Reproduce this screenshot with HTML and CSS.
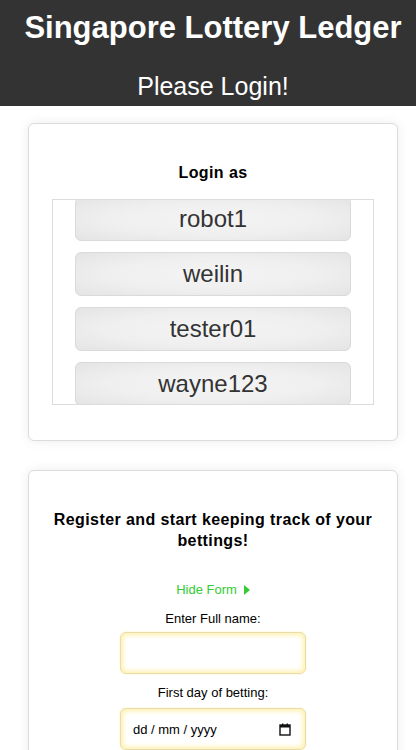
FILE: index.html
```html
<!DOCTYPE html>
<html lang="en">
<head>
<meta charset="utf-8">
<title>Singapore Lottery Ledger</title>
<link rel="stylesheet" href="styles.css">
</head>
<body>
<header class="topbar">
  <h1 class="title">Singapore Lottery Ledger</h1>
  <p class="subtitle">Please Login!</p>
</header>
<main class="content">
  <section class="card login-card">
    <h3 class="card-heading">Login as</h3>
    <div class="user-list">
      <div class="user-list-inner">
        <button class="user-btn">robot1</button>
        <button class="user-btn">weilin</button>
        <button class="user-btn">tester01</button>
        <button class="user-btn">wayne123</button>
      </div>
    </div>
  </section>
  <section class="card register-card">
    <h3 class="card-heading register-heading">Register and start keeping track of your bettings!</h3>
    <a class="toggle-link" href="#">Hide Form <svg class="caret" width="6" height="10" viewBox="0 0 6 10"><path d="M0 0 L6 5 L0 10 Z" fill="#33cc33"/></svg></a>
    <form class="reg-form">
      <label class="field-label" for="fullname">Enter Full name:</label>
      <input class="field-input" id="fullname" type="text">
      <label class="field-label second" for="firstday">First day of betting:</label>
      <div class="date-wrap">
        <input class="field-input date-input" id="firstday" type="text" placeholder="dd / mm / yyyy">
        <svg class="cal-icon" width="12" height="13" viewBox="0 0 12 13"><rect x="1" y="2" width="10" height="10" fill="none" stroke="#111" stroke-width="1.4"/><rect x="1" y="2" width="10" height="2.5" fill="#111"/><rect x="3" y="0.5" width="1.4" height="2" fill="#111"/><rect x="7.6" y="0.5" width="1.4" height="2" fill="#111"/></svg>
      </div>
    </form>
  </section>
</main>
</body>
</html>
```
FILE: styles.css
```css
* { box-sizing: border-box; }
html, body { margin: 0; padding: 0; background: #fff; }
body { font-family: "Liberation Sans", Arial, sans-serif; color: #000; }

.topbar {
  background: #333333;
  color: #fff;
  text-align: center;
  padding: 10px 0 5px 10px;
}
.title {
  margin: 0;
  font-size: 31px;
  line-height: 36px;
  font-weight: bold;
}
.subtitle {
  margin: 25px 0 0;
  font-size: 25px;
  line-height: 30px;
  font-weight: normal;
}

.content {
  padding: 17px 18px 0 28px;
  display: flex;
  flex-direction: column;
  gap: 29px;
}
.card {
  border: 1px solid #dcdcdc;
  border-radius: 6px;
  box-shadow: 0 0 12px rgba(0,0,0,0.08);
  background: #fff;
  padding: 0 23px;
  text-align: center;
}
.login-card { padding-top: 39px; padding-bottom: 35px; }
.card-heading {
  margin: 0;
  font-size: 16px;
  line-height: 19px;
  font-weight: bold;
  letter-spacing: 0.4px;
}
.user-list {
  margin-top: 17px;
  border: 1px solid #dcdcdc;
  height: 206px;
  overflow: hidden;
}
.user-list-inner {
  margin-top: -3px;
  display: flex;
  flex-direction: column;
  align-items: center;
  gap: 11px;
}
.user-btn {
  width: 276px;
  height: 44px;
  flex: none;
  border: 1px solid #dadada;
  border-radius: 6px;
  background: radial-gradient(ellipse at center, #f4f4f4 0%, #efefef 55%, #e4e4e4 100%);
  color: #333;
  font-family: "Liberation Sans", Arial, sans-serif;
  font-size: 24px;
  padding: 0;
}

.register-card { padding: 38px 8px 0; height: 300px; }
.register-heading { line-height: 21px; }
.toggle-link {
  display: inline-flex;
  align-items: center;
  gap: 7px;
  margin-top: 31px;
  font-size: 13px;
  line-height: 16px;
  color: #33cc33;
  text-decoration: none;
}
.reg-form {
  display: flex;
  flex-direction: column;
  align-items: center;
  margin-top: 13px;
}
.field-label {
  font-size: 13px;
  line-height: 16px;
  margin-bottom: 5px;
}
.field-label.second { margin-top: 11px; margin-bottom: 7px; }
.field-input {
  width: 186px;
  height: 42px;
  border: 1px solid #e6dcae;
  border-radius: 6px;
  background: #fff;
  box-shadow: inset 0 0 5px 2px #fff0a8, 0 0 2px #fff0a8;
  font-family: "Liberation Sans", Arial, sans-serif;
  font-size: 13px;
  padding: 0 12px;
  outline: none;
  color: #000;
}
.date-input::placeholder { color: #000; opacity: 1; }
.date-wrap { position: relative; }
.cal-icon {
  position: absolute;
  right: 15px;
  top: 15px;
}
```
